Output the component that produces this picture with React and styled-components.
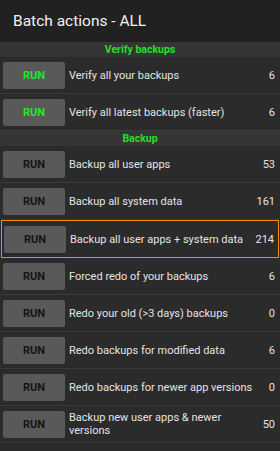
import React from 'react'
import styled, { createGlobalStyle } from 'styled-components'

const GlobalStyle = createGlobalStyle`
  html, body {
    margin: 0;
    padding: 0;
    background: #2b2b2b;
  }
  body {
    font-family: Roboto, "Liberation Sans", sans-serif;
    width: 280px;
    height: 451px;
    overflow: hidden;
  }
`

const Screen = styled.div`
  width: 280px;
  height: 451px;
  background: #2b2b2b;
  display: flex;
  flex-direction: column;
`

const Header = styled.div`
  height: 42px;
  background: #212121;
  display: flex;
  align-items: center;
  padding-left: 13px;
  color: #f2f2f2;
  font-size: 15.5px;
  flex-shrink: 0;
`

const SectionTitle = styled.div`
  height: 15px;
  background: #353535;
  color: #22e022;
  font-weight: bold;
  font-size: 10.5px;
  display: flex;
  align-items: center;
  justify-content: center;
  flex-shrink: 0;
`

const Row = styled.div`
  height: 37px;
  box-sizing: border-box;
  display: flex;
  align-items: center;
  padding: 0 5px 0 3px;
  gap: 4px;
  border-bottom: 1px solid #3a3a3a;
  flex-shrink: 0;
  ${p => p.$focused && `
    margin: 0 1px;
    padding: 0 4px 0 2px;
    border: 1px solid #f58a07;
    height: 38px;
  `}
`

const RunButton = styled.div`
  width: 62px;
  height: 27px;
  flex-shrink: 0;
  background: #595959;
  border-radius: 2px;
  display: flex;
  align-items: center;
  justify-content: center;
  font-weight: bold;
  font-size: 11px;
  color: ${p => (p.$verify ? '#22e822' : '#141414')};
`

const Label = styled.div`
  flex: 1;
  color: #e4e4e4;
  font-size: 11px;
  line-height: 13px;
`

const Count = styled.div`
  color: #e4e4e4;
  font-size: 11px;
  text-align: right;
  min-width: 18px;
`

const verify = [
  ['Verify all your backups', 6],
  ['Verify all latest backups (faster)', 6],
]

const backup = [
  ['Backup all user apps', 53],
  ['Backup all system data', 161],
  ['Backup all user apps + system data', 214, true],
  ['Forced redo of your backups', 6],
  ['Redo your old (>3 days) backups', 0],
  ['Redo backups for modified data', 6],
  ['Redo backups for newer app versions', 0],
  ['Backup new user apps & newer versions', 50],
]

const ActionRow = ({ label, count, focused, isVerify }) => (
  <Row $focused={focused}>
    <RunButton $verify={isVerify}>RUN</RunButton>
    <Label>{label}</Label>
    <Count>{count}</Count>
  </Row>
)

const App = () => (
  <Screen>
    <GlobalStyle />
    <Header>Batch actions - ALL</Header>
    <SectionTitle>Verify backups</SectionTitle>
    {verify.map(([l, c]) => (
      <ActionRow key={l} label={l} count={c} isVerify />
    ))}
    <SectionTitle>Backup</SectionTitle>
    {backup.map(([l, c, f]) => (
      <ActionRow key={l} label={l} count={c} focused={f} />
    ))}
  </Screen>
)

export default App
